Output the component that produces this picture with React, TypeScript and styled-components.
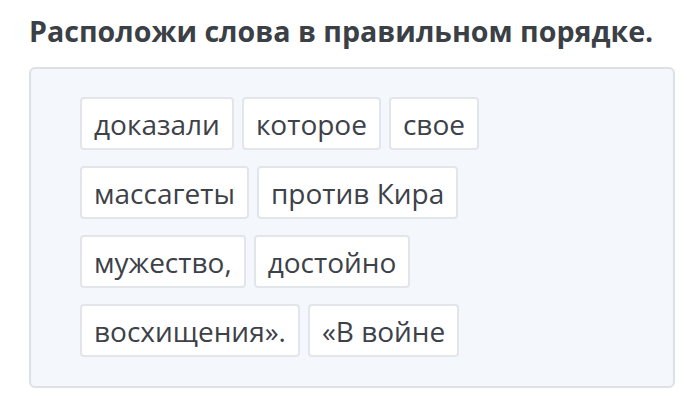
import React from "react";
import styled, { createGlobalStyle } from "styled-components";

const Global = createGlobalStyle`
  html, body { margin: 0; padding: 0; background: #ffffff; }
  body { font-family: "Open Sans", "Noto Sans", sans-serif; }
`;

const Page = styled.div`
  padding: 12px 12px 0 29px;
  width: 687px;
  box-sizing: border-box;
`;

const Title = styled.h1`
  margin: 0 0 17px 0;
  font-size: 28.6px;
  line-height: 38px;
  font-weight: 700;
  color: #3b3f46;
  letter-spacing: 0;
  white-space: nowrap;
`;

const Board = styled.div`
  box-sizing: border-box;
  width: 646px;
  border: 2px solid #dde1e6;
  border-radius: 6px;
  background: #f4f8fc;
  padding: 28px 40px 29px 49px;
`;

const Words = styled.div`
  display: flex;
  flex-wrap: wrap;
  gap: 16px 8px;
  max-width: 520px;
`;

const Chip = styled.div`
  box-sizing: border-box;
  height: 53px;
  min-width: 90px;
  display: flex;
  align-items: center;
  justify-content: center;
  padding: 0 12px;
  background: #ffffff;
  border: 2px solid #e2e5e9;
  border-radius: 4px;
  font-size: 28px;
  color: #3d4148;
  white-space: nowrap;
`;

const words = [
  "доказали",
  "которое",
  "свое",
  "массагеты",
  "против Кира",
  "мужество,",
  "достойно",
  "восхищения».",
  "«В войне",
];

export default function App() {
  return (
    <>
      <Global />
      <Page>
        <Title>Расположи слова в правильном порядке.</Title>
        <Board>
          <Words>
            {words.map((w) => (
              <Chip key={w}>{w}</Chip>
            ))}
          </Words>
        </Board>
      </Page>
    </>
  );
}
